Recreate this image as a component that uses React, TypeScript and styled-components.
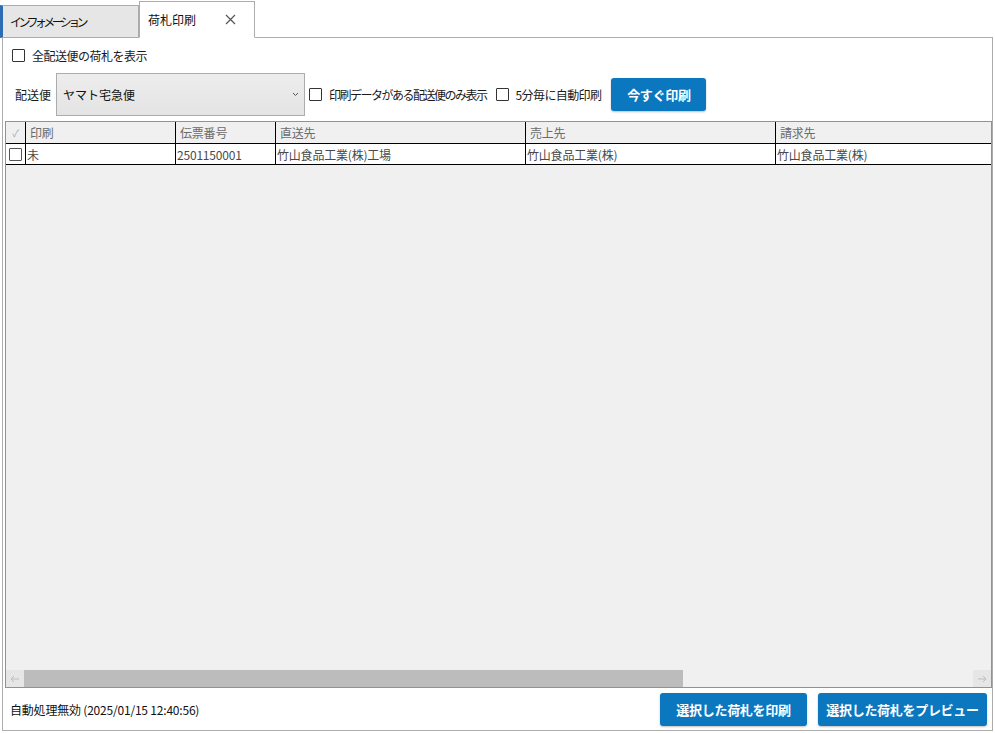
import * as React from 'react';
import styled, { createGlobalStyle } from 'styled-components';

const Global = createGlobalStyle`
    html, body {
        margin: 0;
        padding: 0;
        background: #ffffff;
    }
    body {
        font-family: 'Noto Sans CJK JP', 'Noto Sans', sans-serif;
        font-size: 12px;
        color: #1a1a1a;
    }
`;

const Window = styled.div`
    width: 995px;
    height: 733px;
    display: flex;
    flex-direction: column;
    overflow: hidden;
`;

const TabStrip = styled.div`
    height: 38px;
    display: flex;
    align-items: flex-end;
    border-bottom: 1px solid #acacac;
    box-sizing: border-box;
    margin-right: 2px;
`;

const Tab = styled.div<{ active?: boolean }>`
    box-sizing: border-box;
    display: flex;
    align-items: center;
    height: ${(p) => (p.active ? '37px' : '33px')};
    margin-bottom: -1px;
    padding: 0 ${(p) => (p.active ? '18px' : '10px')} 0 ${(p) => (p.active ? '8px' : '7px')};
    background: ${(p) => (p.active ? '#ffffff' : '#e6e6e6')};
    border: 1px solid #acacac;
    border-bottom-color: ${(p) => (p.active ? '#ffffff' : '#acacac')};
    border-left: ${(p) => (p.active ? '1px solid #acacac' : '3px solid #2b6cb3')};
    width: ${(p) => (p.active ? '116px' : '139px')};
    font-size: 12px;
    color: #111;
    white-space: nowrap;
`;

const TabText = styled.span<{ tight?: number }>`
    letter-spacing: ${(p) => p.tight ?? 0}px;
`;

const Close = styled.span`
    margin-left: auto;
    display: flex;
    align-items: center;
    color: #555;
`;

const Panel = styled.div`
    flex: 1;
    margin: 0 2px 2px 2px;
    border: 1px solid #acacac;
    border-top: none;
    display: flex;
    flex-direction: column;
    padding: 9px 0 0 0;
    box-sizing: border-box;
`;

const Row = styled.div<{ gap?: number }>`
    display: flex;
    align-items: center;
    gap: ${(p) => p.gap ?? 6}px;
`;

const Check = styled.span`
    width: 11px;
    height: 11px;
    border: 1px solid #333;
    border-radius: 1px;
    background: #fff;
    display: inline-block;
    flex: none;
`;

const CheckLabel = styled.label<{ tight?: number }>`
    display: flex;
    align-items: center;
    gap: 7px;
    font-size: 12px;
    color: #1a1a1a;
    white-space: nowrap;
    letter-spacing: ${(p) => p.tight ?? 0}px;
`;

const Select = styled.div`
    box-sizing: border-box;
    width: 249px;
    height: 43px;
    background: linear-gradient(#ededed, #e4e4e4);
    border: 1px solid #acacac;
    display: flex;
    align-items: center;
    padding: 0 5px 0 6px;
    font-size: 12px;
    color: #111;
`;

const Chevron = styled.span`
    margin-left: auto;
    color: #555;
    display: flex;
`;

const BlueButton = styled.button<{ w: number }>`
    width: ${(p) => p.w}px;
    height: 33px;
    border: none;
    border-radius: 3px;
    background: #0a77bf;
    color: #fff;
    font-family: 'Noto Sans CJK JP', sans-serif;
    font-weight: bold;
    font-size: 13px;
    letter-spacing: -0.3px;
    box-shadow: 0 1px 2px rgba(0, 0, 0, 0.25);
    padding: 0;
`;

const Grid = styled.div`
    flex: 1;
    margin: 5px 0 0 2px;
    border: 1px solid #8095b0;
    background: #f0f0f0;
    display: flex;
    flex-direction: column;
    box-sizing: border-box;
`;

const GridRow = styled.div<{ head?: boolean }>`
    display: grid;
    grid-template-columns: 19px 150px 100px 250px 250px 1fr;
    height: ${(p) => (p.head ? '21px' : '20px')};
    background: ${(p) => (p.head ? '#f0f0f0' : '#ffffff')};
    border-bottom: 1px solid #000;
`;

const Cell = styled.div<{ head?: boolean; first?: boolean }>`
    display: flex;
    align-items: center;
    padding-left: ${(p) => (p.head ? '4px' : '1px')};
    border-left: ${(p) => (p.first ? 'none' : '1px solid #000')};
    font-size: 12px;
    letter-spacing: -0.2px;
    color: ${(p) => (p.head ? '#6b6b6b' : '#4a4a4a')};
    white-space: nowrap;
    overflow: hidden;
`;

const CheckCell = styled(Cell)`
    justify-content: center;
    padding-left: 0;
    color: #9aa;
    font-size: 10px;
`;

const Empty = styled.div`
    flex: 1;
`;

const HScroll = styled.div`
    height: 17px;
    display: flex;
    background: #f0f0f0;
`;

const ScrollArrow = styled.div`
    width: 18px;
    display: flex;
    align-items: center;
    justify-content: center;
    background: #e6e6e6;
`;

const ScrollTrack = styled.div`
    flex: 1;
    display: flex;
`;

const Thumb = styled.div`
    background: #bcbcbc;
    height: 100%;
`;

const Footer = styled.div`
    height: 42px;
    display: flex;
    align-items: center;
    padding: 0 5px 0 7px;
    gap: 11px;
`;

const Status = styled.div`
    font-size: 12px;
    letter-spacing: -0.2px;
    color: #111;
    margin-right: auto;
`;

const columns = ['印刷', '伝票番号', '直送先', '売上先', '請求先'];
const rows = [['未', '2501150001', '竹山食品工業(株)工場', '竹山食品工業(株)', '竹山食品工業(株)']];

export default function App() {
    return (
        <Window>
            <Global />
            <TabStrip>
                <Tab>
                    <TabText tight={-3.6}>インフォメーション</TabText>
                </Tab>
                <Tab active>
                    <TabText>荷札印刷</TabText>
                    <Close>
                        <svg width="11" height="11" viewBox="0 0 11 11">
                            <path d="M1 1L10 10M10 1L1 10" stroke="#555" strokeWidth="1.2" />
                        </svg>
                    </Close>
                </Tab>
            </TabStrip>
            <Panel>
                <Row style={{ paddingLeft: 9 }}>
                    <CheckLabel tight={-0.5}>
                        <Check />
                        全配送便の荷札を表示
                    </CheckLabel>
                </Row>
                <Row gap={5} style={{ marginTop: 9, paddingLeft: 12 }}>
                    <span>配送便</span>
                    <Select>
                        ヤマト宅急便
                        <Chevron>
                            <svg width="7" height="5" viewBox="0 0 7 5">
                                <path d="M1 1L3.5 3.5L6 1" stroke="#555" fill="none" strokeWidth="1" />
                            </svg>
                        </Chevron>
                    </Select>
                    <CheckLabel tight={-1.5} style={{ marginLeft: -1 }}>
                        <Check />
                        印刷データがある配送便のみ表示
                    </CheckLabel>
                    <CheckLabel tight={-0.6} style={{ marginLeft: 4 }}>
                        <Check />
                        5分毎に自動印刷
                    </CheckLabel>
                    <BlueButton w={95} style={{ marginLeft: 5 }}>
                        今すぐ印刷
                    </BlueButton>
                </Row>
                <Grid>
                    <GridRow head>
                        <CheckCell head first>
                            ✓
                        </CheckCell>
                        {columns.map((c) => (
                            <Cell head key={c}>
                                {c}
                            </Cell>
                        ))}
                    </GridRow>
                    {rows.map((r, i) => (
                        <GridRow key={i}>
                            <CheckCell first>
                                <Check style={{ borderColor: '#555' }} />
                            </CheckCell>
                            {r.map((v, j) => (
                                <Cell key={j}>{v}</Cell>
                            ))}
                        </GridRow>
                    ))}
                    <Empty />
                    <HScroll>
                        <ScrollArrow>
                            <svg width="10" height="8" viewBox="0 0 10 8">
                                <path d="M9 4H1M4 1L1 4L4 7" stroke="#bdbdbd" fill="none" />
                            </svg>
                        </ScrollArrow>
                        <ScrollTrack>
                            <Thumb style={{ width: 659 }} />
                        </ScrollTrack>
                        <ScrollArrow>
                            <svg width="10" height="8" viewBox="0 0 10 8">
                                <path d="M1 4H9M6 1L9 4L6 7" stroke="#bdbdbd" fill="none" />
                            </svg>
                        </ScrollArrow>
                    </HScroll>
                </Grid>
                <Footer>
                    <Status>自動処理無効 (2025/01/15 12:40:56)</Status>
                    <BlueButton w={147}>選択した荷札を印刷</BlueButton>
                    <BlueButton w={169}>選択した荷札をプレビュー</BlueButton>
                </Footer>
            </Panel>
        </Window>
    );
}
